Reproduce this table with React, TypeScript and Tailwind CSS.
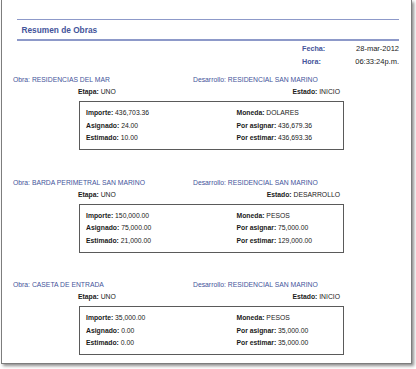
import React from "react";

type Obra = {
  obra: string;
  desarrollo: string;
  etapa: string;
  estado: string;
  importe: string;
  asignado: string;
  estimado: string;
  moneda: string;
  porAsignar: string;
  porEstimar: string;
};

const obras: Obra[] = [
  {
    obra: "RESIDENCIAS DEL MAR",
    desarrollo: "RESIDENCIAL SAN MARINO",
    etapa: "UNO",
    estado: "INICIO",
    importe: "436,703.36",
    asignado: "24.00",
    estimado: "10.00",
    moneda: "DOLARES",
    porAsignar: "436,679.36",
    porEstimar: "436,693.36",
  },
  {
    obra: "BARDA PERIMETRAL SAN MARINO",
    desarrollo: "RESIDENCIAL SAN MARINO",
    etapa: "UNO",
    estado: "DESARROLLO",
    importe: "150,000.00",
    asignado: "75,000.00",
    estimado: "21,000.00",
    moneda: "PESOS",
    porAsignar: "75,000.00",
    porEstimar: "129,000.00",
  },
  {
    obra: "CASETA DE ENTRADA",
    desarrollo: "RESIDENCIAL SAN MARINO",
    etapa: "UNO",
    estado: "INICIO",
    importe: "35,000.00",
    asignado: "0.00",
    estimado: "0.00",
    moneda: "PESOS",
    porAsignar: "35,000.00",
    porEstimar: "35,000.00",
  },
];

function Field({ label, value }: { label: string; value: string }) {
  return (
    <div className="h-[12.5px] leading-[12.5px] whitespace-nowrap">
      <span className="font-bold">{label}</span> {value}
    </div>
  );
}

function Section({ o, first }: { o: Obra; first: boolean }) {
  return (
    <div className={first ? "mt-[6px]" : "mt-[26.5px]"}>
      <div className="flex h-[12px] leading-[12px] pl-[11px] text-[#44549a] whitespace-nowrap">
        <div className="w-[180px] shrink-0">Obra: {o.obra}</div>
        <div>Desarrollo: {o.desarrollo}</div>
      </div>
      <div className="flex justify-between ml-[76px] w-[262px] h-[12px] leading-[12px] text-[#1a1a1a]">
        <div>
          <span className="font-bold">Etapa:</span> {o.etapa}
        </div>
        <div>
          <span className="font-bold">Estado:</span> {o.estado}
        </div>
      </div>
      <div className="mt-[3px] ml-[76.5px] w-[265px] border border-[#5a5a5a] pt-[5px] pb-[4.5px] pl-[6.5px] flex text-[#1a1a1a]">
        <div className="w-[150.5px] shrink-0">
          <Field label="Importe:" value={o.importe} />
          <Field label="Asignado:" value={o.asignado} />
          <Field label="Estimado:" value={o.estimado} />
        </div>
        <div>
          <Field label="Moneda:" value={o.moneda} />
          <Field label="Por asignar:" value={o.porAsignar} />
          <Field label="Por estimar:" value={o.porEstimar} />
        </div>
      </div>
    </div>
  );
}

export default function App() {
  return (
    <div
      className="w-[416px] h-[369px] bg-white overflow-hidden"
      style={{ fontFamily: '"Liberation Sans", Arial, sans-serif' }}
    >
      <div className="ml-[1px] w-[411px] h-[364px] bg-white border-l border-r border-b border-[#7d7d7d] shadow-[2px_2px_3px_rgba(0,0,0,0.45)] text-[6.8px]">
        <div className="pt-[19px] ml-[15px] w-[382px]">
          <div className="border-t-[1.5px] border-[#8d99c9]" />
          <div className="h-[19px] leading-[20px] pl-[4.5px] text-[8.3px] font-bold text-[#44549a]">
            Resumen de Obras
          </div>
          <div className="border-t-2 border-[#8d99c9]" />
        </div>
        <div className="ml-[300px] w-[97px] mt-[2px] text-[7.5px] text-[#44549a]">
          <div className="flex justify-between h-[12.5px] leading-[12.5px]">
            <span className="font-bold text-[7.2px]">Fecha:</span>
            <span className="text-[#1a1a1a]">28-mar-2012</span>
          </div>
          <div className="flex justify-between h-[12.5px] leading-[12.5px]">
            <span className="font-bold text-[7.2px]">Hora:</span>
            <span className="text-[#1a1a1a]">06:33:24p.m.</span>
          </div>
        </div>
        {obras.map((o, i) => (
          <Section key={i} o={o} first={i === 0} />
        ))}
      </div>
    </div>
  );
}
